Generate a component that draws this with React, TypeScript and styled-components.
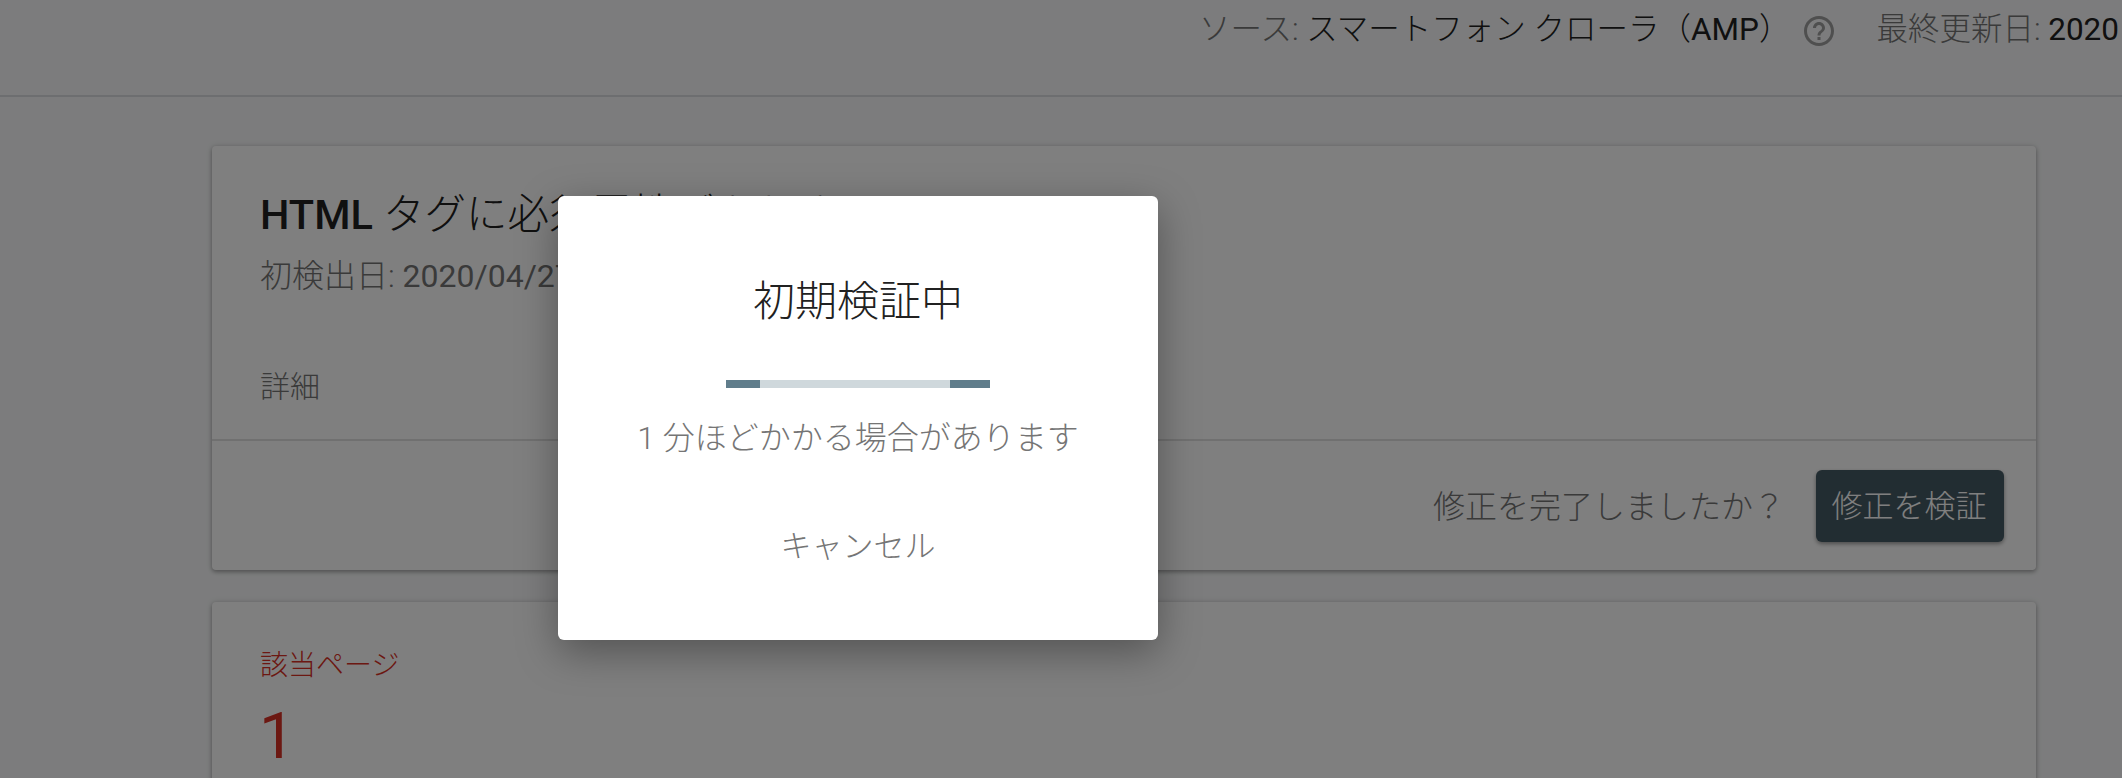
import React from 'react';
import styled, { createGlobalStyle } from 'styled-components';

const GlobalStyle = createGlobalStyle`
  html, body {
    margin: 0;
    padding: 0;
    height: 100%;
    overflow: hidden;
    background: #f8f9fa;
  }
  body {
    font-family: Roboto, "Noto Sans CJK JP", sans-serif;
    color: #212121;
  }
`;

const Page = styled.div`
  position: relative;
  width: 2122px;
  height: 778px;
  overflow: hidden;
`;

const Header = styled.header`
  height: 97px;
  box-sizing: border-box;
  padding: 9px 0 0 1199px;
  border-bottom: 2px solid #dadce0;
  display: flex;
  align-items: flex-start;
  white-space: nowrap;
  font-size: 31.5px;
  font-weight: 300;
  line-height: 42px;
`;

const Muted = styled.span`
  color: #757575;
`;

const Latin = styled.span`
  font-weight: 400;
`;

const HelpIcon = styled.svg`
  width: 36px;
  height: 36px;
  margin: 4px 39px 0 11px;
  flex: none;
  fill: #9e9e9e;
`;

const Main = styled.main`
  padding: 49px 86px 0 212px;
  display: flex;
  flex-direction: column;
  gap: 32px;
`;

const Card = styled.section`
  background: #fff;
  border-radius: 4px;
  box-shadow: 0 2px 4px rgba(0, 0, 0, 0.3), 0 0 6px rgba(0, 0, 0, 0.12);
`;

const CardBody = styled.div`
  height: 293px;
  box-sizing: border-box;
  padding: 42px 48px 0;
`;

const Title = styled.h1`
  margin: 0;
  font-size: 41.5px;
  line-height: 54px;
  font-weight: 300;
  b {
    font-weight: 500;
  }
`;

const Detected = styled.div`
  margin-top: 12px;
  font-size: 32px;
  line-height: 44px;
  font-weight: 300;
  color: #757575;
`;

const Details = styled.div`
  margin-top: 68px;
  font-size: 30px;
  line-height: 42px;
  font-weight: 300;
  color: #757575;
`;

const CardFooter = styled.div`
  height: 131px;
  box-sizing: border-box;
  border-top: 2px solid #e0e0e0;
  padding: 0 32px;
  display: flex;
  align-items: center;
  justify-content: flex-end;
  gap: 31px;
  font-size: 32px;
  font-weight: 300;
  color: #757575;
`;

const FooterLabel = styled.span`
  margin-bottom: 4px;
`;

const ValidateButton = styled.button`
  width: 188px;
  height: 72px;
  padding: 0 2px 4px 0;
  border: none;
  border-radius: 6px;
  background: #455a64;
  color: #fff;
  font: inherit;
  font-size: 31px;
  box-shadow: 0 2px 4px rgba(0, 0, 0, 0.4);
`;

const StatCard = styled(Card)`
  height: 300px;
  box-sizing: border-box;
  padding: 44px 48px;
  color: #d93025;
`;

const StatLabel = styled.div`
  font-size: 28px;
  line-height: 40px;
  font-weight: 300;
`;

const StatValue = styled.div`
  margin-top: 13px;
  margin-left: -1px;
  font-size: 64px;
  line-height: 76px;
`;

const Overlay = styled.div`
  position: absolute;
  inset: 0;
  background: rgba(0, 0, 0, 0.5);
  padding: 196px 0 0 558px;
  box-sizing: border-box;
`;

const Dialog = styled.div`
  width: 600px;
  height: 444px;
  box-sizing: border-box;
  padding-top: 76px;
  background: #fff;
  border-radius: 6px;
  box-shadow: 0 12px 40px rgba(0, 0, 0, 0.35);
  display: flex;
  flex-direction: column;
  align-items: center;
`;

const DialogTitle = styled.h2`
  margin: 0;
  font-size: 42px;
  line-height: 60px;
  font-weight: 300;
  color: #212121;
`;

const Progress = styled.div`
  margin-top: 48px;
  width: 264px;
  height: 8px;
  display: flex;
  background: #cfd8dc;
`;

const ProgressSegment = styled.div<{ $width: number }>`
  width: ${props => props.$width}px;
  background: #607d8b;
  &:last-child {
    margin-left: auto;
  }
`;

const DialogText = styled.p`
  margin: 28px 0 0;
  font-size: 32px;
  line-height: 44px;
  font-weight: 300;
  color: #757575;
`;

const CancelButton = styled.button`
  margin-top: 65px;
  padding: 0;
  border: none;
  background: none;
  font: inherit;
  font-size: 31px;
  font-weight: 300;
  line-height: 44px;
  color: #757575;
`;

const App: React.FC = () => {
  return (
    <Page>
      <GlobalStyle />
      <Header>
        <Muted>ソース:&nbsp;</Muted>
        <span>スマートフォン クローラ（<Latin>AMP</Latin>）</span>
        <HelpIcon viewBox="0 0 24 24">
          <path d="M11 18h2v-2h-2v2zm1-16C6.48 2 2 6.48 2 12s4.48 10 10 10 10-4.48 10-10S17.52 2 12 2zm0 18c-4.41 0-8-3.59-8-8s3.59-8 8-8 8 3.59 8 8-3.59 8-8 8zm0-14c-2.21 0-4 1.79-4 4h2c0-1.1.9-2 2-2s2 .9 2 2c0 2-3 1.75-3 5h2c0-2.25 3-2.5 3-5 0-2.21-1.79-4-4-4z" />
        </HelpIcon>
        <Muted>最終更新日:&nbsp;</Muted>
        <Latin>2020</Latin>
      </Header>
      <Main>
        <Card>
          <CardBody>
            <Title><b>HTML</b> タグに必須属性がありません</Title>
            <Detected>初検出日: <Latin>2020/04/27</Latin></Detected>
            <Details>詳細</Details>
          </CardBody>
          <CardFooter>
            <FooterLabel>修正を完了しましたか？</FooterLabel>
            <ValidateButton>修正を検証</ValidateButton>
          </CardFooter>
        </Card>
        <StatCard>
          <StatLabel>該当ページ</StatLabel>
          <StatValue>1</StatValue>
        </StatCard>
      </Main>
      <Overlay>
        <Dialog>
          <DialogTitle>初期検証中</DialogTitle>
          <Progress>
            <ProgressSegment $width={34} />
            <ProgressSegment $width={40} />
          </Progress>
          <DialogText>1 分ほどかかる場合があります</DialogText>
          <CancelButton>キャンセル</CancelButton>
        </Dialog>
      </Overlay>
    </Page>
  );
};

export default App;
